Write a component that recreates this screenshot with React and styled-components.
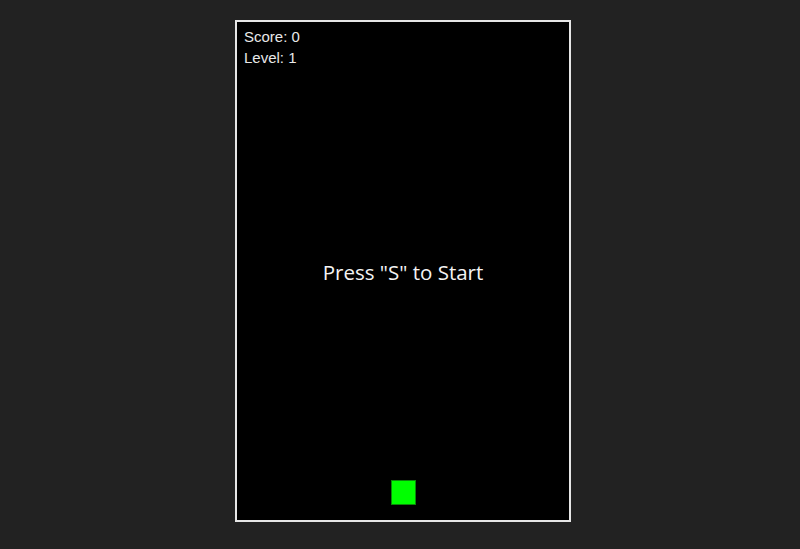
import React from "react";
import styled, { createGlobalStyle } from "styled-components";

const Global = createGlobalStyle`
  html, body { margin: 0; padding: 0; background: #222222; }
  #root { width: 800px; height: 549px; }
`;

const Page = styled.div`
  display: flex;
  justify-content: center;
  padding: 20px 0 0 6px;
  box-sizing: border-box;
  width: 800px;
  height: 549px;
`;

const Board = styled.div`
  width: 332px;
  height: 498px;
  border: 2px solid #e6e6e6;
  background: #000;
  display: flex;
  flex-direction: column;
`;

const Hud = styled.div`
  padding: 4px 0 2px 7px;
  font-family: "Liberation Sans", Arial, sans-serif;
  font-size: 15px;
  line-height: 21px;
  color: #e8e8e8;
`;

const HudLine = styled.div``;

const Message = styled.div`
  flex: 1;
  display: flex;
  align-items: center;
  justify-content: center;
  font-family: "Open Sans", sans-serif;
  font-size: 20.5px;
  color: #f4f4f4;
  padding-bottom: 6px;
`;

const PlayerRow = styled.div`
  display: flex;
  justify-content: center;
  padding: 0 0 15px 0;
`;

const Player = styled.div`
  width: 25px;
  height: 25px;
  background: #00ff00;
  box-sizing: border-box;
  border: 1px solid #0a8a0a;
`;

export default function App() {
  return (
    <>
      <Global />
      <Page>
        <Board>
          <Hud>
            <HudLine>Score: 0</HudLine>
            <HudLine>Level: 1</HudLine>
          </Hud>
          <Message>Press "S" to Start</Message>
          <PlayerRow>
            <Player />
          </PlayerRow>
        </Board>
      </Page>
    </>
  );
}
